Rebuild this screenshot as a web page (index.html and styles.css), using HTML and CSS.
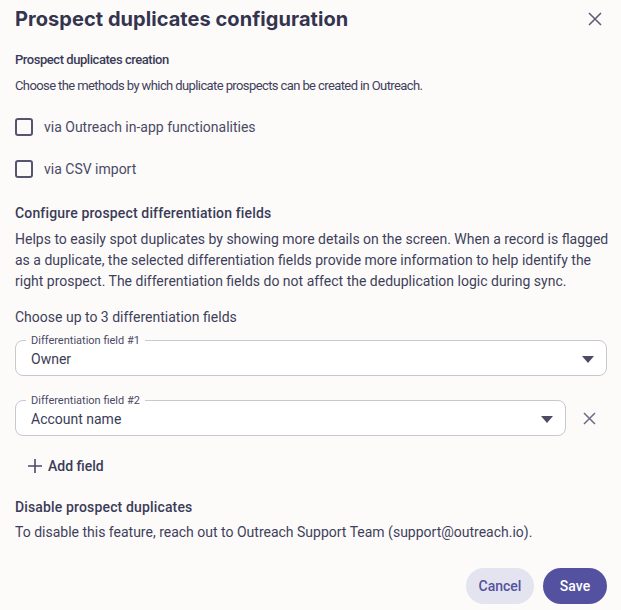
FILE: index.html
```html
<!DOCTYPE html>
<html>
<head>
<meta charset="utf-8">
<link rel="stylesheet" href="styles.css">
</head>
<body>
<div class="dialog">
  <header class="head">
    <h1 class="title">Prospect duplicates configuration</h1>
    <button class="icon-btn close" aria-label="Close">
      <svg width="14" height="14" viewBox="0 0 14 14"><path d="M1 1L13 13M13 1L1 13" stroke="#5d5d78" stroke-width="1.6" fill="none"/></svg>
    </button>
  </header>

  <section class="sec">
    <h2 class="sec-title narrow">Prospect duplicates creation</h2>
    <p class="text narrow-text">Choose the methods by which duplicate prospects can be created in Outreach.</p>
    <label class="check"><span class="box"></span>via Outreach in-app functionalities</label>
    <label class="check"><span class="box"></span>via CSV import</label>
  </section>

  <section class="sec sec2">
    <h2 class="sec-title">Configure prospect differentiation fields</h2>
    <p class="text para">Helps to easily spot duplicates by showing more details on the screen. When a record is flagged as a duplicate, the selected differentiation fields provide more information to help identify the right prospect. The differentiation fields do not affect the deduplication logic during sync.</p>
    <p class="text choose">Choose up to 3 differentiation fields</p>

    <div class="field-row">
      <div class="field">
        <span class="flabel">Differentiation field #1</span>
        <span class="fvalue">Owner</span>
        <svg class="caret" width="12" height="7" viewBox="0 0 12 7"><path d="M0 0H12L6 7Z" fill="#4b4b66"/></svg>
      </div>
    </div>

    <div class="field-row">
      <div class="field">
        <span class="flabel">Differentiation field #2</span>
        <span class="fvalue">Account name</span>
        <svg class="caret" width="12" height="7" viewBox="0 0 12 7"><path d="M0 0H12L6 7Z" fill="#4b4b66"/></svg>
      </div>
      <button class="icon-btn remove" aria-label="Remove">
        <svg width="13" height="13" viewBox="0 0 13 13"><path d="M1 1L12 12M12 1L1 12" stroke="#6a6a84" stroke-width="1.5" fill="none"/></svg>
      </button>
    </div>

    <button class="add">
      <svg width="14" height="14" viewBox="0 0 14 14"><path d="M7 0V14M0 7H14" stroke="#4b4b66" stroke-width="1.6" fill="none"/></svg>
      Add field
    </button>
  </section>

  <section class="sec sec3">
    <h2 class="sec-title">Disable prospect duplicates</h2>
    <p class="text">To disable this feature, reach out to Outreach Support Team (support@outreach.io).</p>
  </section>

  <footer class="foot">
    <button class="btn cancel">Cancel</button>
    <button class="btn save">Save</button>
  </footer>
</div>
</body>
</html>
```

FILE: styles.css
```css
* { box-sizing: border-box; }
html, body { margin: 0; padding: 0; background: #fcfbfa; }
body {
  font-family: Roboto, "Noto Sans", sans-serif;
  color: #3b3b58;
  width: 621px;
  height: 610px;
  overflow: hidden;
}
.dialog { padding: 0 14px 0 15px; }
.head {
  display: flex;
  align-items: center;
  justify-content: space-between;
  height: 38px;
}
.title {
  margin: 0;
  font-family: Inter, Roboto, sans-serif;
  font-size: 20px;
  font-weight: 700;
  color: #34344f;
  letter-spacing: 0.05px;
}
.icon-btn {
  border: 0;
  background: none;
  padding: 0;
  display: flex;
  align-items: center;
  justify-content: center;
  cursor: pointer;
}
.close { width: 24px; height: 24px; }
.sec { padding-top: 12px; }
.sec-title {
  margin: 0;
  font-size: 14px;
  font-weight: 500;
  color: #3b3b58;
  line-height: 20px;
  letter-spacing: 0.15px;
}
.sec-title.narrow { font-size: 13px; letter-spacing: -0.45px; }
.text {
  margin: 5px 0 0;
  font-size: 14px;
  line-height: 21px;
  color: #3f3f5b;
}
.narrow-text { font-size: 13px; letter-spacing: -0.6px; }
.check {
  display: flex;
  align-items: center;
  gap: 11px;
  font-size: 14px;
  height: 20px;
  margin-top: 21px;
  color: #4a4a65;
}
.check + .check { margin-top: 22px; }
.box {
  width: 18px;
  height: 18px;
  border: 2px solid #55556f;
  border-radius: 3px;
}
.sec2 { padding-top: 24px; }
.para { margin-top: 6px; margin-right: -8px; }
.choose { margin-top: 15px; }
.field-row {
  display: flex;
  align-items: center;
  gap: 6px;
  margin-top: 12px;
}
.field-row + .field-row { margin-top: 24px; }
.field {
  position: relative;
  flex: 1;
  height: 36px;
  border: 1px solid #c9c8cf;
  border-radius: 8px;
  background: #fff;
  display: flex;
  align-items: center;
  padding: 0 0 0 15px;
}
.flabel {
  position: absolute;
  top: -7px;
  left: 10px;
  padding: 0 5px;
  font-size: 11px;
  line-height: 13px;
  color: #4a4a63;
  background: linear-gradient(to bottom, #fcfbfa 50%, #fff 50%);
}
.fvalue { font-size: 14px; color: #3b3b58; padding-top: 1px; }
.caret { position: absolute; right: 12px; top: 15px; }
.remove { width: 35px; height: 30px; }
.add {
  display: flex;
  align-items: center;
  gap: 6px;
  margin: 20px 0 0 13px;
  padding: 0;
  border: 0;
  background: none;
  font-family: inherit;
  font-size: 14px;
  font-weight: 500;
  color: #3b3b58;
  height: 20px;
}
.sec3 { padding-top: 21px; }
.foot {
  display: flex;
  justify-content: flex-end;
  gap: 9px;
  margin-top: 25px;
}
.btn {
  border: 0;
  height: 36px;
  border-radius: 18px;
  font-family: inherit;
  font-size: 14px;
  font-weight: 500;
  padding: 0;
}
.cancel { background: #e3e4ef; color: #5451a0; width: 68px; }
.save { background: #5451a0; color: #fff; width: 64px; }
```
